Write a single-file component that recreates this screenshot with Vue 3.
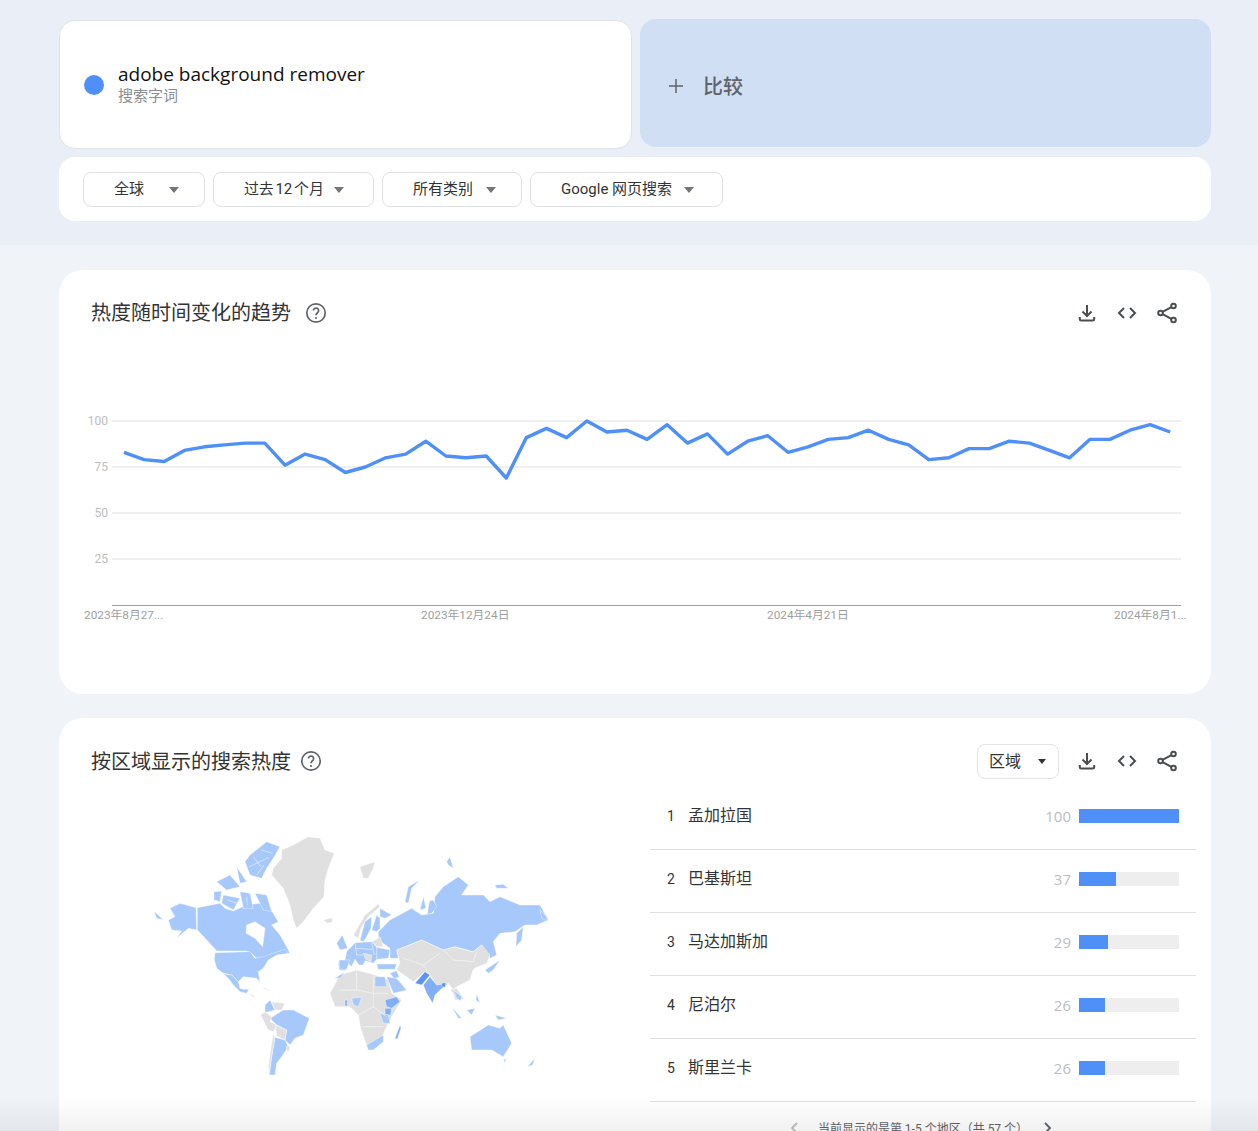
<script setup>
// 趋势数据（0-100），从左到右共 53 周
const trend = [83,79,78,84,86,87,88,88,76,82,79,72,75,80,82,89,81,80,81,69,91,96,91,100,94,95,90,98,88,93,82,89,92,83,86,90,91,95,90,87,79,80,85,85,89,88,84,80,90,90,95,98,94];
const linePoints = trend.map((v, i) => `${(65 + i * 20.12).toFixed(1)},${(251 - v * 1.84).toFixed(1)}`).join(' ');

const gridLines = [
  { y: 67, label: '100' },
  { y: 113, label: '75' },
  { y: 159, label: '50' },
  { y: 205, label: '25' },
];
const dates = [
  { x: 25, label: '2023年8月27...' },
  { x: 362, label: '2023年12月24日' },
  { x: 708, label: '2024年4月21日' },
  { x: 1055, label: '2024年8月1...' },
];
const filters = ['全球', '过去 12 个月', '所有类别', 'Google 网页搜索'];
const regions = [
  { name: '孟加拉国', value: 100 },
  { name: '巴基斯坦', value: 37 },
  { name: '马达加斯加', value: 29 },
  { name: '尼泊尔', value: 26 },
  { name: '斯里兰卡', value: 26 },
];

const BLUE = '#a6c8fb';
const GREY = '#e0e0e0';
const MID = '#82aef5';
const DARK = '#5b93f3';

// 地图按几块分组，每组坐标是 3 倍放大后量出来的
const mapGroups = [
  {
    // 北极、加拿大、格陵兰
    transform: 'scale(0.3333)',
    shapes: [
      [GREY, '505,35 540,40 555,75 583,85 565,130 555,165 552,215 520,250 490,290 470,310 460,285 450,240 430,190 395,150 400,130 425,100 425,75 460,60'],
      [GREY, '550,285 575,278 578,290 562,295'],
      [BLUE, '90,250 120,235 168,248 170,315 145,310 110,340 125,318 95,315 85,285 105,275'],
      [BLUE, '42,258 70,285 50,280'],
      [BLUE, '172,248 240,235 255,250 280,258 320,240 360,235 385,240 415,290 395,300 420,330 440,365 450,385 420,385 390,400 360,410 335,385 320,378 230,378 205,350 172,315'],
      ['#fff', '320,300 345,290 375,310 368,365 345,340 318,325'],
      [BLUE, '330,90 380,50 420,65 400,100 380,130 365,160 330,150 315,110'],
      [BLUE, '230,170 270,150 300,185 260,195'],
      [BLUE, '222,200 245,198 240,230 222,225'],
      [BLUE, '290,125 320,170 300,175'],
      [BLUE, '250,210 300,220 280,255 245,235'],
      [BLUE, '300,200 330,205 340,250 310,250'],
      [BLUE, '345,205 380,210 395,260 370,255'],
    ],
    lines: [
      '340,95 362,125',
      '328,125 385,98',
      '350,150 372,120',
      '365,75 398,85',
      '262,225 290,235',
      '320,215 322,240',
    ],
  },
  {
    // 美国、墨西哥
    transform: 'translate(65 115) scale(0.3333)',
    shapes: [
      [BLUE, '30,38 135,35 150,55 175,50 210,38 240,28 250,40 215,45 190,60 175,85 160,95 165,128 155,115 115,110 100,125 80,105 55,100 35,85 28,60'],
      [BLUE, '55,102 80,105 100,125 105,145 115,148 132,148 125,160 105,155 85,135 70,115'],
      [GREY, '132,162 150,175 145,165'],
      [GREY, '170,140 205,155 180,148'],
    ],
  },
  {
    // 俄罗斯
    transform: 'translate(200 0) scale(0.3333)',
    shapes: [
      [BLUE, '115,320 150,285 215,250 245,270 280,265 285,215 310,185 355,155 385,180 365,210 430,210 450,230 480,215 540,240 600,240 625,285 590,300 555,300 525,320 480,325 460,350 470,390 450,400 425,360 400,380 345,365 310,375 245,345 170,375 175,400 150,400 150,370 115,345'],
      [BLUE, '195,230 205,185 240,165 215,190 205,235'],
      [BLUE, '240,255 250,215 258,250'],
      [BLUE, '262,268 268,228 280,225 290,245 275,265'],
      [BLUE, '530,325 550,305 545,345 528,365'],
      [BLUE, '465,180 490,178 505,190 470,190'],
      [BLUE, '320,110 330,95 340,130 325,120'],
      [BLUE, '600,255 620,275 622,288 605,280'],
      [GREY, '60,125 105,110 100,130 85,160 70,160'],
    ],
  },
  {
    // 欧洲
    transform: 'translate(195 75) scale(0.3333)',
    shapes: [
      [GREY, '55,105 90,45 130,12 135,20 100,50 78,85 70,115'],
      [BLUE, '75,120 90,65 110,50 108,85 95,110 85,125'],
      [BLUE, '110,90 125,45 135,55 135,85 125,95'],
      [BLUE, '135,25 170,45 150,55 135,50'],
      [BLUE, '22,105 30,125 38,145 15,150 5,130'],
      [BLUE, '35,155 60,128 112,125 125,142 165,150 160,175 125,178 115,190 90,182 85,195 72,195 60,178 50,200 30,180'],
      [GREY, '112,125 135,110 145,140 125,140'],
      [GREY, '85,160 110,165 108,185 92,178'],
      [BLUE, '10,185 40,190 30,212 12,210'],
    ],
    lines: [
      '60,128 65,165 85,165',
      '110,128 118,165',
      '60,145 112,148',
      '125,142 125,178',
    ],
  },
  {
    // 南美、非洲、亚洲南部、大洋洲
    transform: 'translate(100 135) scale(0.3333)',
    shapes: [
      [BLUE, '90,175 130,150 160,150 208,175 190,225 165,235 150,255 135,240 140,210 110,195'],
      [BLUE, '75,135 90,120 105,150 75,158'],
      [GREY, '95,125 135,130 125,150 105,150'],
      [GREY, '62,165 75,155 95,170 90,185 110,195 100,215 85,210'],
      [GREY, '105,195 140,210 135,240 110,228'],
      [BLUE, '105,232 135,240 145,260 125,290 110,310 105,345 88,345 95,290'],
      [GREY, '100,220 105,235 95,290 88,335 85,320 92,270'],
      [GREY, '138,260 150,258 148,272 140,272'],
      [GREY, '270,100 300,45 350,30 405,45 445,60 455,100 485,120 455,170 435,210 420,250 385,270 362,205 355,165 330,140 285,140'],
      [BLUE, '285,55 315,35 300,55'],
      [BLUE, '405,50 435,50 440,80 405,80'],
      [BLUE, '335,115 365,112 355,140 340,135'],
      [MID, '315,120 322,120 322,138 315,138'],
      [MID, '435,120 470,110 480,125 455,145 440,140'],
      [MID, '435,145 455,145 452,165 435,165'],
      [BLUE, '420,160 445,165 450,190 430,190'],
      [BLUE, '380,255 405,240 430,225 430,245 400,270 385,270'],
      [MID, '465,235 480,195 483,205 472,238'],
      [BLUE, '440,50 470,55 500,90 460,100'],
      [GREY, '471,-30 546,-60 609,-30 645,-39 699,-24 726,-45 750,-15 741,9 705,24 699,30 690,60 650,80 640,90 625,70 590,75 570,45 555,35 520,65 500,50 470,30 480,10'],
      [BLUE, '410,12 470,12 465,28 415,28'],
      [BLUE, '297,0 330,0 320,28 300,28'],
      [BLUE, '450,40 470,32 478,52 462,55'],
      [DARK, '525,70 555,35 570,45 545,75'],
      [MID, '550,75 570,50 590,75 625,70 600,90 585,105 578,130 560,100'],
      [DARK, '605,70 618,68 615,82 606,80'],
      [GREY, '630,90 650,85 672,118 645,120 640,100'],
      [BLUE, '640,90 665,110 662,122 650,115'],
      [BLUE, '735,30 780,0 760,30 745,40'],
      [BLUE, '635,140 665,175 655,175'],
      [BLUE, '680,150 705,145 695,165'],
      [BLUE, '710,100 720,130 708,120'],
      [BLUE, '765,165 800,175 775,180'],
      [BLUE, '690,230 745,195 780,205 790,195 815,250 790,290 755,270 695,270'],
      [BLUE, '790,298 798,298 795,308'],
      [BLUE, '862,320 885,295 878,315'],
    ],
    // 国界白线
    lines: [
      '610,-30 640,0 700,5 710,-25',
      '490,-5 550,15 600,-20',
      '550,15 570,45',
      '350,30 350,90 300,90',
      '400,45 400,140',
      '350,90 400,100 445,100',
      '355,165 400,140 440,170',
      '370,200 430,200',
    ],
  },
];
</script>

<template>
  <div class="page">
    <section class="top-band">
      <div class="terms">
        <div class="term-card">
          <span class="term-dot"></span>
          <div>
            <div class="term-name">adobe background remover</div>
            <div class="term-type">搜索字词</div>
          </div>
        </div>
        <div class="compare-card">
          <svg class="plus" viewBox="0 0 14 14" width="14" height="14">
            <path d="M7 0v14M0 7h14" fill="none" stroke="#5f6368" stroke-width="1.5" />
          </svg>
          <span>比较</span>
        </div>
      </div>
      <div class="filters">
        <button v-for="f in filters" :key="f" class="filter">
          <span>{{ f }}</span>
          <i class="caret"></i>
        </button>
      </div>
    </section>

    <section class="card chart-card">
      <header class="card-head chart-head">
        <h2>热度随时间变化的趋势</h2>
        <svg class="help" viewBox="0 0 24 24" width="24" height="24">
          <circle cx="12" cy="12" r="9.2" fill="none" stroke="#5f6368" stroke-width="1.7" />
          <path d="M9.4 9.6a2.6 2.6 0 1 1 4.2 2.1c-.9.7-1.6 1.2-1.6 2.5" fill="none" stroke="#5f6368" stroke-width="1.7" />
          <circle cx="12" cy="17" r="1.1" fill="#5f6368" />
        </svg>
        <div class="spacer"></div>
        <div class="actions">
          <svg viewBox="0 0 24 24" width="24" height="24">
            <path d="M12 4v11M7.5 10.5 12 15l4.5-4.5M4.8 16v2.2c0 .8.5 1.3 1.3 1.3h11.8c.8 0 1.3-.5 1.3-1.3V16" />
          </svg>
          <svg viewBox="0 0 24 24" width="24" height="24">
            <path d="M9 7l-5 5 5 5M15 7l5 5-5 5" />
          </svg>
          <svg viewBox="0 0 24 24" width="24" height="24">
            <circle cx="18.5" cy="5" r="2.3" />
            <circle cx="5.5" cy="12" r="2.3" />
            <circle cx="18.5" cy="19" r="2.3" />
            <path d="M7.6 10.9 16.4 6.2M7.6 13.1l8.8 4.7" />
          </svg>
        </div>
      </header>
      <svg class="chart" viewBox="0 0 1152 340" width="1152" height="340">
        <g v-for="g in gridLines" :key="g.y">
          <line x1="53" x2="1122" :y1="g.y" :y2="g.y" stroke="#e0e0e0" />
          <text x="49" :y="g.y + 4" text-anchor="end" class="y-label">{{ g.label }}</text>
        </g>
        <line x1="53" x2="1122" y1="251.5" y2="251.5" stroke="#9e9e9e" />
        <polyline :points="linePoints" fill="none" stroke="#4e8ff8" stroke-width="3.4" stroke-linejoin="round" />
        <text v-for="d in dates" :key="d.x" :x="d.x" y="265" class="x-label">{{ d.label }}</text>
      </svg>
    </section>

    <section class="card region-card">
      <header class="card-head region-head">
        <h2>按区域显示的搜索热度</h2>
        <svg class="help help-region" viewBox="0 0 24 24" width="24" height="24">
          <circle cx="12" cy="12" r="9.2" fill="none" stroke="#5f6368" stroke-width="1.7" />
          <path d="M9.4 9.6a2.6 2.6 0 1 1 4.2 2.1c-.9.7-1.6 1.2-1.6 2.5" fill="none" stroke="#5f6368" stroke-width="1.7" />
          <circle cx="12" cy="17" r="1.1" fill="#5f6368" />
        </svg>
        <div class="spacer"></div>
        <button class="region-select">
          <span>区域</span>
          <i class="caret caret-dark"></i>
        </button>
        <div class="actions">
          <svg viewBox="0 0 24 24" width="24" height="24">
            <path d="M12 4v11M7.5 10.5 12 15l4.5-4.5M4.8 16v2.2c0 .8.5 1.3 1.3 1.3h11.8c.8 0 1.3-.5 1.3-1.3V16" />
          </svg>
          <svg viewBox="0 0 24 24" width="24" height="24">
            <path d="M9 7l-5 5 5 5M15 7l5 5-5 5" />
          </svg>
          <svg viewBox="0 0 24 24" width="24" height="24">
            <circle cx="18.5" cy="5" r="2.3" />
            <circle cx="5.5" cy="12" r="2.3" />
            <circle cx="18.5" cy="19" r="2.3" />
            <path d="M7.6 10.9 16.4 6.2M7.6 13.1l8.8 4.7" />
          </svg>
        </div>
      </header>

      <div class="region-body">
        <div class="map-wrap">
          <svg viewBox="0 0 420 270" width="420" height="270">
            <g v-for="(g, i) in mapGroups" :key="i" :transform="g.transform">
              <polygon
                v-for="(s, j) in g.shapes"
                :key="j"
                :points="s[1]"
                :fill="s[0]"
                stroke="#fff"
                stroke-width="1.2"
                stroke-linejoin="round"
              />
              <polyline
                v-for="l in g.lines"
                :key="l"
                :points="l"
                fill="none"
                stroke="#fff"
                stroke-width="1.5"
              />
            </g>
          </svg>
        </div>
        <div class="region-list">
          <div v-for="(r, i) in regions" :key="r.name" class="region-row">
            <span class="rank">{{ i + 1 }}</span>
            <span class="region-name">{{ r.name }}</span>
            <span class="region-value">{{ r.value }}</span>
            <div class="bar"><div class="bar-fill" :style="{ width: r.value + '%' }"></div></div>
          </div>
          <div class="pager">
            <svg viewBox="0 0 8 12" width="8" height="12"><path d="M7 1 2 6l5 5" fill="none" stroke="#bdbdbd" stroke-width="1.8" /></svg>
            <span>当前显示的是第 1-5 个地区（共 57 个）</span>
            <svg class="pager-next" viewBox="0 0 8 12" width="8" height="12"><path d="m1 1 5 5-5 5" fill="none" stroke="#5f6368" stroke-width="1.8" /></svg>
          </div>
        </div>
      </div>
    </section>

    <div class="bottom-fade"></div>
  </div>
</template>

<style>
html, body { margin: 0; background: #f0f4f9; }
</style>

<style scoped>
.page {
  position: relative;
  height: 1131px;
  overflow: hidden;
  background: #f0f4f9;
  font-family: Roboto, "Noto Sans CJK SC", sans-serif;
  color: #202124;
}
.top-band {
  height: 245px;
  box-sizing: border-box;
  padding: 19px 47px 0 59px;
  background: #e9eef7;
}
.terms { display: flex; gap: 8px; height: 130px; }
.term-card {
  flex: 0 0 573px;
  box-sizing: border-box;
  height: 129px;
  margin-top: 1px;
  display: flex;
  align-items: center;
  gap: 14px;
  padding: 0 0 0 24px;
  background: #fff;
  border: 1px solid #e1e3e6;
  border-radius: 16px;
}
.term-dot { width: 20px; height: 20px; border-radius: 50%; background: #4e8ff8; }
.term-name { font-family: "Open Sans", "Noto Sans CJK SC", sans-serif; font-size: 19px; line-height: 24px; color: #111; margin-top: -2px; }
.term-type { font-size: 15px; line-height: 20px; color: #8a8d91; }
.compare-card {
  flex: 1;
  height: 128px;
  display: flex;
  align-items: center;
  gap: 20px;
  padding: 5px 0 0 29px;
  box-sizing: border-box;
  background: #d0dff4;
  border-radius: 16px;
  font-size: 20px;
  font-weight: 500;
  color: #5f6368;
}
.filters {
  display: flex;
  gap: 8px;
  height: 64px;
  margin-top: 8px;
  padding: 15px 24px 0;
  box-sizing: border-box;
  background: #fff;
  border-radius: 16px;
}
.filter {
  height: 35px;
  box-sizing: border-box;
  display: flex;
  align-items: center;
  justify-content: space-between;
  padding: 0 25px 0 30px;
  background: #fff;
  border: 1px solid #dfe1e5;
  border-radius: 8px;
  font: 15px Roboto, "Noto Sans CJK SC", sans-serif;
  color: #333;
}
.filter span { margin-top: -4px; }
.filter:nth-child(1) { width: 122px; }
.filter:nth-child(2) { width: 161px; padding-right: 29px; word-spacing: -1.5px; letter-spacing: -0.2px; }
.filter:nth-child(3) { width: 140px; }
.filter:nth-child(4) { width: 193px; padding-right: 28px; }
.caret {
  display: block;
  width: 0;
  height: 0;
  border-left: 5.5px solid transparent;
  border-right: 5.5px solid transparent;
  border-top: 6px solid #757575;
}
.caret-dark { border-left-width: 4.5px; border-right-width: 4.5px; border-top: 5px solid #333; }

.card {
  margin: 0 47px 0 59px;
  background: #fff;
  border-radius: 24px;
}
.chart-card { margin-top: 25px; height: 424px; }
.region-card { margin-top: 24px; height: 500px; }
.card-head { display: flex; align-items: center; box-sizing: border-box; padding: 0 32px; }
.card-head h2 { margin: 0; font-size: 20px; font-weight: 400; color: #333; line-height: 28px; }
.chart-head { height: 84px; padding-top: 2px; }
.region-head { height: 69px; padding-top: 26px; padding-bottom: 8px; }
.region-head .actions, .region-head .help { margin-top: -1px; }
.help { margin-left: 13px; }
.help-region { margin-left: 8px; }
.spacer { flex: 1; }
.actions { display: flex; gap: 16px; }
.actions svg { display: block; }
.actions path, .actions circle { fill: none; stroke: #4a4d50; stroke-width: 2; }
.region-select {
  width: 82px;
  height: 35px;
  box-sizing: border-box;
  display: flex;
  align-items: center;
  justify-content: space-between;
  padding: 0 12px 0 11px;
  margin-right: 16px;
  background: #fff;
  border: 1px solid #e3e3e3;
  border-radius: 8px;
  font: 16px "Noto Sans CJK SC", sans-serif;
  color: #333;
}
.region-select span { margin-top: -3px; }
.chart { display: block; }
.y-label { font-size: 12px; fill: #bdbdbd; }
.x-label { font-size: 11.8px; fill: #9e9e9e; }

.region-body { display: flex; }
.map-wrap { flex: 0 0 591px; padding: 38px 0 0 81px; box-sizing: border-box; }
.map-wrap svg { display: block; }
.region-list { width: 546px; }
.region-row {
  height: 63px;
  box-sizing: border-box;
  display: flex;
  align-items: center;
  padding: 0 17px 4px 17px;
  border-bottom: 1px solid #e0e0e0;
  font-size: 16px;
  color: #333;
}
.rank { width: 21px; font-size: 14px; margin-top: -1px; }
.region-name { flex: 1; margin-top: -4px; }
.region-value { font-family: "Open Sans", sans-serif; font-size: 15px; color: #bdbdbd; margin-right: 8px; }
.bar { width: 100px; height: 14px; background: #eee; }
.bar-fill { height: 100%; background: #4e8ff8; }
.pager {
  display: flex;
  align-items: center;
  justify-content: center;
  gap: 20px;
  margin-top: 17px;
  font-size: 12px;
  color: #5f6368;
}
.pager-next { margin-left: -4px; margin-right: 4px; }
.bottom-fade {
  position: absolute;
  left: 0;
  right: 0;
  bottom: 0;
  height: 34px;
  background: linear-gradient(rgba(0, 0, 0, 0), rgba(0, 0, 0, 0.055));
  pointer-events: none;
}
</style>
